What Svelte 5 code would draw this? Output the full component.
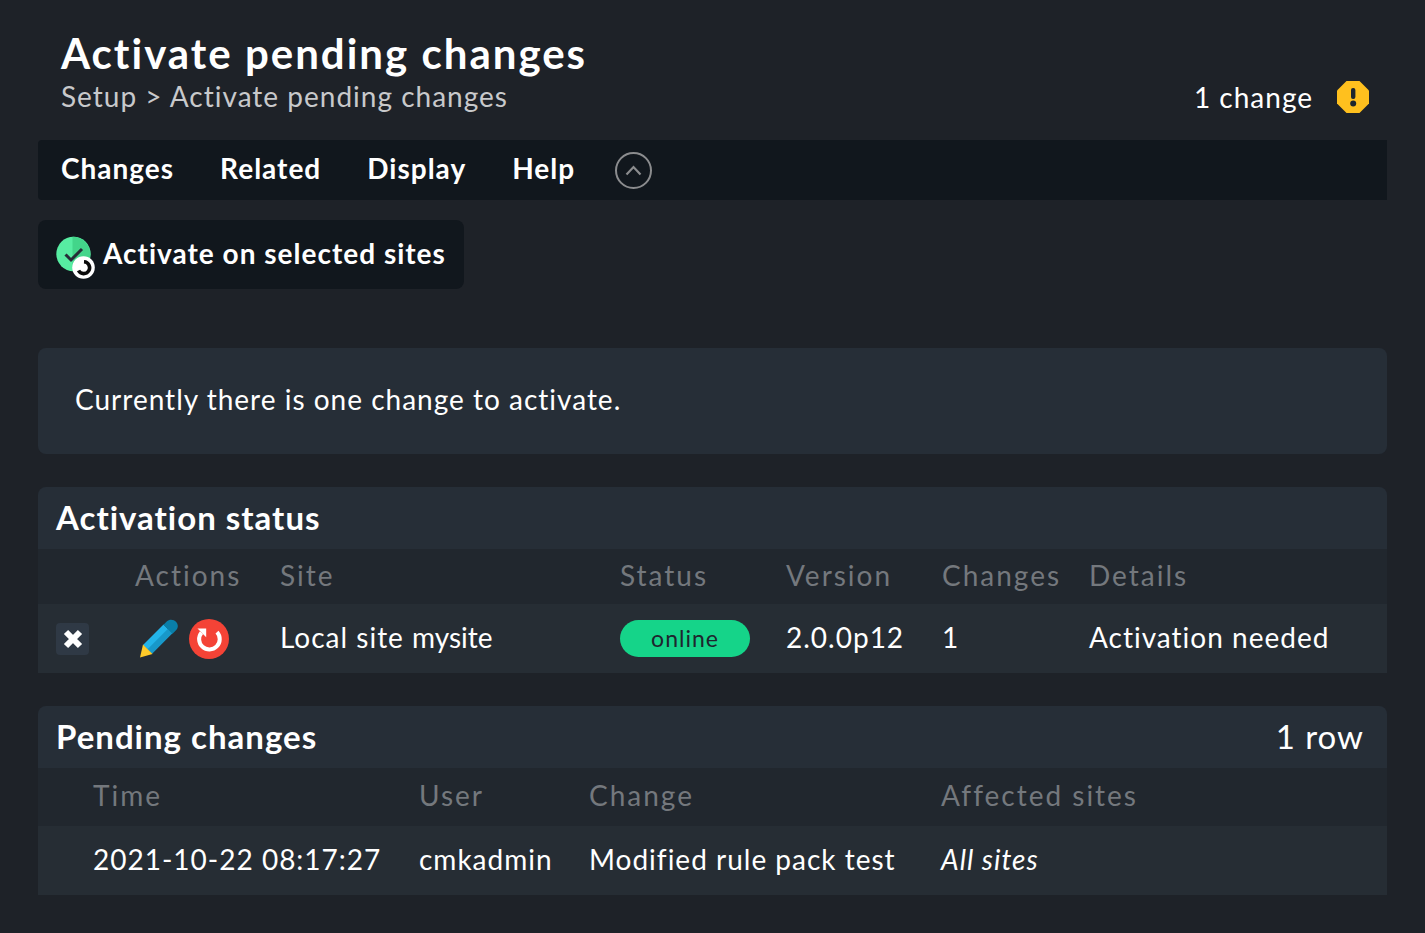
<script lang="ts">
	interface Site {
		name: string;
		id: string;
		status: string;
		version: string;
		changes: number;
		details: string;
	}

	interface Change {
		time: string;
		user: string;
		text: string;
		affected: string;
	}

	const menus = ['Changes', 'Related', 'Display', 'Help'];

	const sites: Site[] = [
		{
			name: 'Local site',
			id: 'mysite',
			status: 'online',
			version: '2.0.0p12',
			changes: 1,
			details: 'Activation needed'
		}
	];

	const changes: Change[] = [
		{
			time: '2021-10-22 08:17:27',
			user: 'cmkadmin',
			text: 'Modified rule pack test',
			affected: 'All sites'
		}
	];

	let selected = $state([true]);
</script>

<main class="page">
	<header class="top">
		<div class="titles">
			<h1>Activate pending changes</h1>
			<nav class="crumbs" aria-label="Breadcrumb">
				<a href="#setup">Setup</a> &gt; <a href="#activate">Activate pending changes</a>
			</nav>
		</div>
		<a class="pending" href="#pending">
			<span>1 change</span>
			<svg width="32" height="32" viewBox="0 0 32 32" aria-hidden="true">
				<path d="M9.5 0h13L32 9.5v13L22.5 32h-13L0 22.5v-13z" fill="#ffc01e" />
				<rect x="14" y="7" width="4.4" height="11" rx="2" fill="#1e262e" />
				<circle cx="16.200" cy="22.500" r="3" fill="#1e262e" />
			</svg>
		</a>
	</header>

	<nav class="menubar" aria-label="Page menu">
		{#each menus as menu}
			<button type="button">{menu}</button>
		{/each}
		<button type="button" class="toggle" aria-label="Hide suggestions">
			<svg width="37" height="37" viewBox="0 0 37 37" fill="none" stroke="#8b8c8e" aria-hidden="true">
				<circle cx="18.5" cy="18.5" r="17.5" stroke-width="2" />
				<path d="M11.5 22.5l7-7.5 7 7.5" stroke-width="2.2" />
			</svg>
		</button>
	</nav>

	<button type="button" class="activate">
		<svg width="40" height="44" viewBox="0 0 40 44" aria-hidden="true">
			<circle cx="18.500" cy="18" r="17.200" fill="#57eda2" />
			<path d="M17.500 0.800a17.200 17.200 0 0 1 1 34.400h-1z" fill="#43d58a" />
			<path d="M10.500 18.500l5.500 5.500 11-11" fill="none" stroke="#262e38" stroke-width="3" />
			<circle cx="28.500" cy="31.500" r="11.300" fill="#fff" />
			<path
				d="M29 25.800a5.900 5.900 0 1 1-5.500 8.700"
				fill="none"
				stroke="#0a0a0a"
				stroke-width="3.600"
			/>
		</svg>
		<span>Activate on selected sites</span>
	</button>

	<p class="message">Currently there is one change to activate.</p>

	<section class="panel">
		<div class="panel-head">
			<h2>Activation status</h2>
		</div>
		<table class="status-table">
			<colgroup>
				<col class="c-check" />
				<col class="c-actions" />
				<col class="c-site" />
				<col class="c-status" />
				<col class="c-version" />
				<col class="c-count" />
				<col />
			</colgroup>
			<thead>
				<tr>
					<td></td>
					<th scope="col">Actions</th>
					<th scope="col">Site</th>
					<th scope="col">Status</th>
					<th scope="col">Version</th>
					<th scope="col">Changes</th>
					<th scope="col">Details</th>
				</tr>
			</thead>
			<tbody>
				{#each sites as site, i}
					<tr>
						<td class="boxed">
							<label class="check">
								<input type="checkbox" bind:checked={selected[i]} aria-label="Select {site.id}" />
								<svg width="20" height="20" viewBox="0 0 20 20" aria-hidden="true">
									<path d="M3 3l14 14M17 3L3 17" stroke="#fff" stroke-width="6" />
								</svg>
							</label>
						</td>
						<td class="boxed">
							<div class="actions">
								<a href="#edit" aria-label="Edit site">
									<svg width="40" height="40" viewBox="0 0 40 40" aria-hidden="true">
										<path d="M5 26L25.5 5.5l8.500 8.500L14 34.500z" fill="#23b4e9" />
										<path d="M9.500 30.200L30 9.800l4.500 4.500L14 34.700z" fill="#1898c9" />
										<path d="M25.500 5.700l3.200-3.200c3-3 7.300-1.800 9.300.2s2.800 5.800 0 8.600l-3.500 3.500z" fill="#0a7fa9" />
										<path d="M5 25.500l9.500 9.500L2 38.500z" fill="#ffcb2a" />
									</svg>
								</a>
								<a href="#restart" aria-label="Restart site">
									<svg width="40" height="40" viewBox="0 0 40 40" aria-hidden="true">
										<circle cx="20" cy="20" r="20" fill="#f44336" />
										<path
											d="M28 13.200a10.300 10.300 0 1 1-15.500.4"
											fill="none"
											stroke="#fff"
											stroke-width="4"
										/>
										<path d="M8.500 9.500h8.700v8.700z" fill="#fff" />
									</svg>
								</a>
							</div>
						</td>
						<td>{site.name} <a class="site-id" href="#mysite">{site.id}</a></td>
						<td class="boxed"><span class="badge">{site.status}</span></td>
						<td>{site.version}</td>
						<td>{site.changes}</td>
						<td>{site.details}</td>
					</tr>
				{/each}
			</tbody>
		</table>
	</section>

	<section class="panel">
		<div class="panel-head">
			<h2>Pending changes</h2>
			<span>1 row</span>
		</div>
		<table class="changes-table">
			<colgroup>
				<col class="c-time" />
				<col class="c-user" />
				<col class="c-change" />
				<col />
			</colgroup>
			<thead>
				<tr>
					<th scope="col">Time</th>
					<th scope="col">User</th>
					<th scope="col">Change</th>
					<th scope="col">Affected sites</th>
				</tr>
			</thead>
			<tbody>
				{#each changes as change}
					<tr>
						<td>{change.time}</td>
						<td>{change.user}</td>
						<td>{change.text}</td>
						<td><em>{change.affected}</em></td>
					</tr>
				{/each}
			</tbody>
		</table>
	</section>
</main>

<style>
	:global(body) {
		background: #1e2228;
	}

	.page {
		padding: 30px 38px 38px;
		font-family: Lato, 'Liberation Sans', sans-serif;
		font-size: 28px;
		line-height: 34px;
		letter-spacing: 1px;
		color: #fff;
	}

	h1,
	h2,
	p {
		margin: 0;
	}

	a {
		color: inherit;
		text-decoration: none;
	}

	button {
		padding: 0;
		border: 0;
		background: none;
		color: inherit;
		font: inherit;
		font-weight: 700;
		letter-spacing: inherit;
		cursor: pointer;
	}

	svg {
		display: block;
	}

	.top {
		display: flex;
		justify-content: space-between;
		align-items: flex-end;
		padding: 0 18px 26px 23px;
	}

	.titles {
		display: grid;
		gap: 3px;
		padding-bottom: 1px;
	}

	h1 {
		font-size: 42px;
		line-height: 46px;
		letter-spacing: 2px;
	}

	.crumbs {
		color: #c8c9cb;
	}

	.pending {
		display: flex;
		align-items: center;
		gap: 24px;
	}

	.menubar {
		display: flex;
		align-items: center;
		gap: 46px;
		height: 60px;
		padding: 0 23px;
		border-radius: 4px 0 0 4px;
		background: #11171d;
	}

	.menubar button {
		padding-bottom: 4px;
	}

	.menubar .toggle {
		margin-left: -6px;
		padding: 0;
	}

	.activate {
		display: flex;
		align-items: flex-start;
		gap: 8px;
		margin-top: 20px;
		padding: 16px 18px 9px 17px;
		border-radius: 8px;
		background: #11171d;
	}

	.message {
		margin-top: 59px;
		padding: 34px 37px 38px;
		border-radius: 8px;
		background: #262e37;
	}

	.panel {
		margin-top: 33px;
	}

	.panel-head {
		display: flex;
		justify-content: space-between;
		align-items: center;
		height: 60px;
		padding: 0 23px 2px 18px;
		border-radius: 8px 8px 0 0;
		background: #262e37;
		font-size: 33px;
	}

	h2 {
		font-size: 33px;
	}

	table {
		width: 100%;
		table-layout: fixed;
		border-collapse: collapse;
	}

	th,
	td {
		padding: 0 0 4px 18px;
		text-align: left;
		white-space: nowrap;
	}

	th {
		color: #74787d;
		font-weight: 400;
		letter-spacing: 2px;
	}

	.boxed {
		padding-bottom: 0;
	}

	thead tr {
		height: 55px;
		background: #21272e;
	}

	tbody tr {
		height: 69px;
		background: #262d34;
	}

	.changes-table thead tr {
		height: 58px;
	}

	.changes-table th:first-child,
	.changes-table td:first-child {
		padding-left: 55px;
	}

	.c-check {
		width: 79px;
	}

	.c-actions {
		width: 145px;
	}

	.c-site {
		width: 340px;
	}

	.c-status {
		width: 166px;
	}

	.c-version {
		width: 156px;
	}

	.c-count {
		width: 147px;
	}

	.c-time {
		width: 363px;
	}

	.c-user {
		width: 170px;
	}

	.c-change {
		width: 352px;
	}

	.check {
		position: relative;
		display: grid;
		place-items: center;
		width: 33px;
		height: 32px;
		border-radius: 4px;
		background: #2f3945;
	}

	.check input {
		position: absolute;
		inset: 0;
		width: 100%;
		height: 100%;
		margin: 0;
		opacity: 0;
	}

	.check input:not(:checked) + svg {
		visibility: hidden;
	}

	.actions {
		display: flex;
		gap: 11px;
		padding-left: 3px;
	}

	.site-id {
		letter-spacing: 0;
	}

	.badge {
		display: block;
		width: 130px;
		border-radius: 19px;
		background: #15d489;
		color: #1e262e;
		font-size: 23px;
		line-height: 37px;
		text-align: center;
	}
</style>
